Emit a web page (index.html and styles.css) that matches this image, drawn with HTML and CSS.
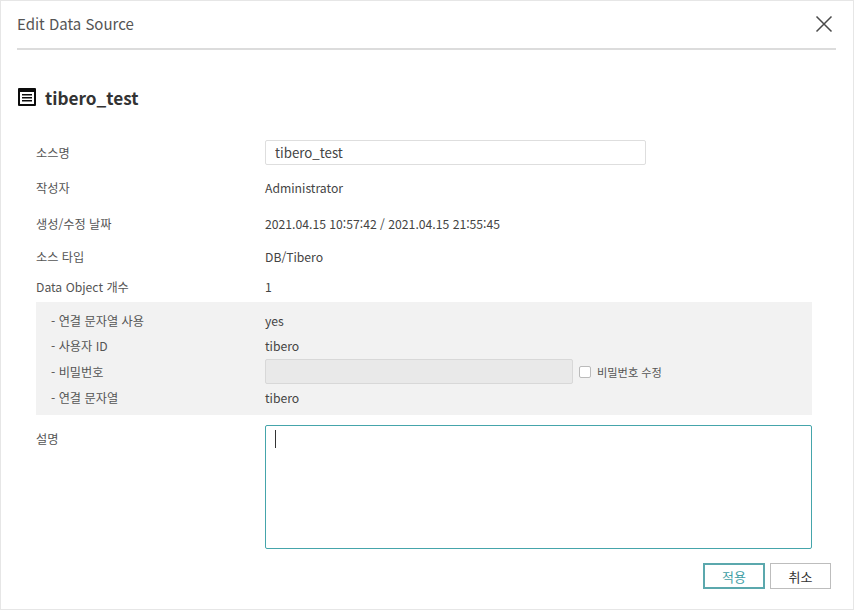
FILE: index.html
```html
<!DOCTYPE html>
<html lang="ko">
<head>
  <meta charset="UTF-8">
  <title>Edit Data Source</title>
  <link rel="stylesheet" href="styles.css">
</head>
<body>
  <div class="dialog">
    <div class="dialog-header">
      <span class="dialog-title">Edit Data Source</span>
      <svg class="close-icon" width="18" height="18" viewBox="0 0 18 18"><path d="M1.5 1.5 L16.5 16.5 M16.5 1.5 L1.5 16.5" stroke="#4a4a4a" stroke-width="1.5" fill="none"/></svg>
    </div>

    <h2 class="source-name">
      <svg width="18" height="18" viewBox="0 0 18 18"><rect width="18" height="18" rx="1" fill="#0c0c0c"/><rect x="2" y="4" width="14" height="12" fill="#fff"/><path d="M4 6.7 H14 M4 9.7 H14 M4 12.7 H14" stroke="#0c0c0c" stroke-width="1.5"/></svg>
      tibero_test
    </h2>

    <div class="row row-name">
      <span class="label">소스명</span>
      <input class="text-input name-input" type="text" value="tibero_test">
    </div>
    <div class="row row-author">
      <span class="label">작성자</span>
      <span class="value">Administrator</span>
    </div>
    <div class="row row-date">
      <span class="label">생성/수정 날짜</span>
      <span class="value">2021.04.15 10:57:42 / 2021.04.15 21:55:45</span>
    </div>
    <div class="row row-type">
      <span class="label">소스 타입</span>
      <span class="value">DB/Tibero</span>
    </div>
    <div class="row row-count">
      <span class="label">Data Object 개수</span>
      <span class="value">1</span>
    </div>

    <div class="detail-box">
      <div class="detail-row">
        <span class="detail-label">- 연결 문자열 사용</span>
        <span class="value">yes</span>
      </div>
      <div class="detail-row">
        <span class="detail-label">- 사용자 ID</span>
        <span class="value">tibero</span>
      </div>
      <div class="detail-row">
        <span class="detail-label">- 비밀번호</span>
        <input class="text-input password-input" type="text" disabled>
        <label class="check-label"><span class="check-box"></span>비밀번호 수정</label>
      </div>
      <div class="detail-row">
        <span class="detail-label">- 연결 문자열</span>
        <span class="value">tibero</span>
      </div>
    </div>

    <div class="row row-desc">
      <span class="label">설명</span>
      <div class="desc-box"><span class="caret"></span></div>
    </div>

    <div class="actions">
      <button class="btn btn-apply">적용</button>
      <button class="btn">취소</button>
    </div>
  </div>
</body>
</html>
```

FILE: styles.css
```css
* {
  box-sizing: border-box;
}
body {
  margin: 0;
  background: #fff;
  font-family: "Noto Sans CJK KR", "Noto Sans", sans-serif;
  color: #444;
}
.dialog {
  width: 854px;
  height: 610px;
  padding: 0 17px 0 16px;
  border: 1px solid #e6e6e6;
}
.dialog-header {
  display: flex;
  justify-content: space-between;
  align-items: center;
  height: 49px;
  padding-right: 3px;
  padding-bottom: 2px;
  border-bottom: 2px solid #dcdcdc;
}
.dialog-title {
  font-size: 15px;
  color: #555;
}
.source-name {
  display: flex;
  align-items: center;
  gap: 9px;
  height: 26px;
  margin: 34px 0 0;
  padding-left: 1px;
  font-size: 17.2px;
  font-weight: 700;
  color: #333;
}
.row {
  display: grid;
  grid-template-columns: 229px 1fr;
  align-items: center;
  margin-left: 19px;
  font-size: 12.2px;
}
.row-name {
  height: 25px;
  margin-top: 30px;
}
.row-author {
  height: 20px;
  margin-top: 13px;
}
.row-date {
  height: 20px;
  margin-top: 16px;
}
.row-type {
  height: 20px;
  margin-top: 13px;
}
.row-count {
  height: 20px;
  margin-top: 10px;
}
.label {
  color: #555;
}
.value {
  color: #444;
}
.text-input {
  height: 25px;
  border: 1px solid #dedede;
  border-radius: 2px;
  background: #fff;
  font-family: inherit;
}
.name-input {
  width: 381px;
  padding: 0 9px;
  font-size: 13.3px;
  color: #444;
}
.detail-box {
  width: 776px;
  height: 113px;
  margin: 5px 0 0 19px;
  padding: 6px 0 5px;
  background: #f2f2f2;
  font-size: 12.2px;
}
.detail-row {
  display: flex;
  align-items: center;
  height: 25.5px;
  padding-left: 15px;
}
.detail-row:last-child {
  padding-top: 1px;
}
.detail-label {
  width: 214px;
  color: #555;
}
.password-input {
  width: 308px;
  background: #e9e9e9;
  border-color: #d8d8d8;
}
.check-label {
  display: flex;
  align-items: center;
  gap: 6px;
  margin-left: 6px;
  font-size: 11.2px;
  color: #555;
}
.check-box {
  width: 12px;
  height: 12px;
  border: 1px solid #bbb;
  border-radius: 2px;
  background: #fff;
}
.row-desc {
  align-items: start;
  margin-top: 10px;
}
.row-desc .label {
  margin-top: 5px;
}
.desc-box {
  width: 547px;
  height: 124px;
  padding: 4px 9px;
  border: 1px solid #45a5ab;
  border-radius: 2px;
}
.caret {
  display: block;
  width: 1px;
  height: 18px;
  background: #333;
}
.actions {
  display: flex;
  justify-content: flex-end;
  gap: 5px;
  margin-top: 14px;
  padding-right: 5px;
}
.btn {
  width: 61px;
  height: 26px;
  padding: 0;
  border: 1px solid #bdbdbd;
  background: #fff;
  font-family: inherit;
  font-size: 13px;
  color: #333;
}
.btn-apply {
  width: 62px;
  border: 2px solid #5ba8ad;
  color: #3f9ea4;
}
```
